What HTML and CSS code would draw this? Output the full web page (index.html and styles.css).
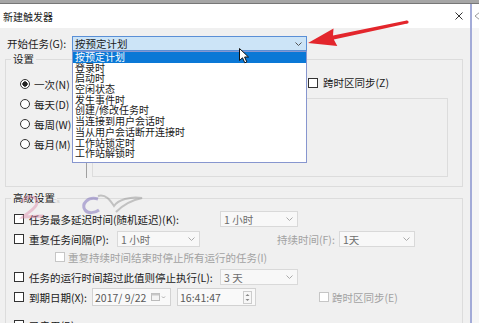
FILE: index.html
```html
<!DOCTYPE html>
<html lang="zh-CN">
<head>
    <meta charset="UTF-8">
    <meta name="viewport" content="width=device-width, initial-scale=1.0">
    <title>新建触发器</title>
    <link rel="stylesheet" href="styles.css">
</head>
<body>
    <div class="frame-top"></div>
    <div class="screen">
        <div class="dialog">
            <div class="titlebar">
                <span class="title">新建触发器</span>
                <svg class="close" width="8" height="8" viewBox="0 0 8 8"><path d="M0.5 0.5L7.5 7.5M7.5 0.5L0.5 7.5" stroke="#333" stroke-width="1"/></svg>
            </div>
            <div class="body">
                <div class="start-row">
                    <span class="start-label">开始任务(G):</span>
                    <div class="combo">
                        <span>按预定计划</span>
                        <svg class="chev" width="7" height="4" viewBox="0 0 7 4"><polyline points="0.5,0.5 3.5,3.5 6.5,0.5" fill="none" stroke="#555" stroke-width="1"/></svg>
                        <ul class="droplist">
                            <li class="active">按预定计划</li>
                            <li>登录时</li>
                            <li>启动时</li>
                            <li>空闲状态</li>
                            <li>发生事件时</li>
                            <li>创建/修改任务时</li>
                            <li>当连接到用户会话时</li>
                            <li>当从用户会话断开连接时</li>
                            <li>工作站锁定时</li>
                            <li>工作站解锁时</li>
                        </ul>
                    </div>
                </div>

                <fieldset class="group">
                    <legend>设置</legend>
                    <div class="set-body">
                        <div class="radios">
                            <div class="radio-row"><span class="radio checked"></span>一次(N)</div>
                            <div class="radio-row"><span class="radio"></span>每天(D)</div>
                            <div class="radio-row"><span class="radio"></span>每周(W)</div>
                            <div class="radio-row"><span class="radio"></span>每月(M)</div>
                        </div>
                        <div class="vsep"></div>
                        <div class="set-right">
                            <div class="start-line"><span class="chk"></span>跨时区同步(Z)</div>
                            <div class="inner-box"></div>
                        </div>
                    </div>
                </fieldset>

                <fieldset class="group adv">
                    <legend>高级设置</legend>
                    <div class="adv-body">
                        <div class="row">
                            <span class="chk"></span>
                            <span class="lbl lbl-wide">任务最多延迟时间(随机延迟)(K):</span>
                            <div class="sel w78"><span>1 小时</span><svg class="chev" width="7" height="4" viewBox="0 0 7 4"><polyline points="0.5,0.5 3.5,3.5 6.5,0.5" fill="none" stroke="#aaa" stroke-width="1"/></svg></div>
                        </div>
                        <div class="row">
                            <span class="chk"></span>
                            <span class="lbl lbl-repeat">重复任务间隔(P):</span>
                            <div class="sel w83"><span>1 小时</span><svg class="chev" width="7" height="4" viewBox="0 0 7 4"><polyline points="0.5,0.5 3.5,3.5 6.5,0.5" fill="none" stroke="#aaa" stroke-width="1"/></svg></div>
                            <span class="lbl lbl-dur off">持续时间(F):</span>
                            <div class="sel w76"><span>1天</span><svg class="chev" width="7" height="4" viewBox="0 0 7 4"><polyline points="0.5,0.5 3.5,3.5 6.5,0.5" fill="none" stroke="#aaa" stroke-width="1"/></svg></div>
                        </div>
                        <div class="row row-sub">
                            <span class="chk off"></span>
                            <span class="off">重复持续时间结束时停止所有运行的任务(I)</span>
                        </div>
                        <div class="row row-stop">
                            <span class="chk"></span>
                            <span class="lbl lbl-wide">任务的运行时间超过此值则停止执行(L):</span>
                            <div class="sel w78"><span>3 天</span><svg class="chev" width="7" height="4" viewBox="0 0 7 4"><polyline points="0.5,0.5 3.5,3.5 6.5,0.5" fill="none" stroke="#aaa" stroke-width="1"/></svg></div>
                        </div>
                        <div class="row">
                            <span class="chk"></span>
                            <span class="lbl lbl-date">到期日期(X):</span>
                            <div class="field">
                                <span>2017/ 9/22</span>
                                <svg class="cal" width="16" height="10" viewBox="0 0 16 10"><rect x="0.5" y="1.5" width="8" height="7" fill="#f4f4f4" stroke="#bbb"/><rect x="0.5" y="1.5" width="8" height="2" fill="#c8c8c8"/><polyline points="11,4.5 12.5,6 14,4.5" fill="none" stroke="#aaa"/></svg>
                            </div>
                            <div class="field time">
                                <span>16:41:47</span>
                                <svg class="spin" width="9" height="13" viewBox="0 0 9 13"><rect x="0.5" y="0.5" width="8" height="12" fill="#f7f7f7" stroke="#ccc"/><polygon points="2.5,5 4.5,3 6.5,5" fill="#888"/><polygon points="2.5,8 4.5,10 6.5,8" fill="#888"/></svg>
                            </div>
                            <span class="chk off sync-e"></span>
                            <span class="off">跨时区同步(E)</span>
                        </div>
                        <div class="row row-on">
                            <span class="chk"></span>
                            <span class="lbl">已启用(B)</span>
                        </div>
                    </div>
                </fieldset>
            </div>
        </div>
        <div class="behind">
            <div class="behind-top">
                <svg width="7" height="10" viewBox="0 0 7 10"><path d="M7 1L2 5L7 9" fill="none" stroke="#999" stroke-width="1"/></svg>
            </div>
        </div>
    </div>

    <svg class="watermark" width="130" height="34" viewBox="0 0 130 34">
        <path d="M4 16 C8 9 20 9 19 17 C18 23 9 27 5 31 L25 30" fill="none" stroke="#e08aa8" stroke-width="3"/>
        <text x="27" y="17" font-size="6" fill="#999" font-family="Liberation Sans, sans-serif">3PCs</text>
        <path d="M80 13 C70 10 63 18 67 24 C70 28 77 27 81 24" fill="none" stroke="#6c5cb4" stroke-width="3"/>
        <path d="M80 10 C88 8 92 14 96 20 C100 14 112 10 124 12 C114 14 104 20 98 26" fill="none" stroke="#8a8a8a" stroke-width="2"/>
    </svg>

    <svg class="arrow" width="115" height="40" viewBox="0 0 115 40">
        <polygon points="8,29 37.3,32 33.8,25.6 107.3,9.6 106.7,6.4 33,21.6 33.5,14.4" fill="#e3262c"/>
        <circle cx="107" cy="8" r="1.6" fill="#e3262c"/>
    </svg>

    <svg class="cursor" width="11" height="16" viewBox="0 0 11 16">
        <path d="M0.5 0.5L0.5 12.5L3.5 9.8L5.8 14.8L7.8 13.9L5.6 9L9.5 9Z" fill="#fff" stroke="#111" stroke-width="1"/>
    </svg>
</body>
</html>
```

FILE: styles.css
```css
body {
    margin: 0;
    width: 479px;
    height: 323px;
    overflow: hidden;
    font-family: "Noto Sans CJK SC", "Noto Sans", sans-serif;
    font-size: 10.5px;
    color: #1a1a1a;
    background-color: #f5f5f5;
}
.frame-top {
    height: 3px;
    background-color: #a6a6a6;
    border-bottom: 1px solid #777;
}
.screen {
    display: flex;
    height: 319px;
    overflow: hidden;
}
.dialog {
    width: 472px;
    flex: none;
    box-sizing: border-box;
    border-right: 2px solid #a3abd8;
    background-color: #f0f0f0;
}
.titlebar {
    display: flex;
    justify-content: space-between;
    align-items: center;
    height: 24px;
    padding: 0 7px 0 3px;
    background-color: #fff;
}
.title {
    font-size: 10px;
}
.behind {
    flex: 1;
    background-color: #f6f6f6;
}
.behind-top {
    height: 24px;
    display: flex;
    align-items: center;
    padding-left: 1px;
    background-color: #fff;
}

/* start combo */
.start-row {
    display: flex;
    align-items: center;
    height: 15px;
    margin-top: 8px;
    padding-left: 7px;
}
.start-label {
    width: 65px;
    flex: none;
}
.combo {
    position: relative;
    z-index: 5;
    display: flex;
    align-items: center;
    width: 235px;
    height: 15px;
    box-sizing: border-box;
    padding: 0 4px 0 2px;
    border: 1px solid #5a8fd6;
    background-color: #cce4f7;
}
.chev {
    margin-left: auto;
}
.droplist {
    position: absolute;
    top: 14px;
    left: -1px;
    right: -1px;
    margin: 0;
    padding: 0 0 3px;
    list-style: none;
    border: 1px solid #8796cf;
    background-color: #fff;
}
.droplist li {
    height: 10.7px;
    line-height: 10.7px;
    padding-left: 2px;
    font-size: 10px;
    white-space: nowrap;
}
.droplist li.active {
    background-color: #0a78d6;
    color: #fff;
}

/* group boxes */
.group {
    margin: 2px 7px 0 5px;
    padding: 0;
    min-width: 0;
    border: 1px solid #dcdcdc;
}
.group legend {
    margin-left: 5px;
    padding: 0 2px;
    line-height: 12px;
}
.adv {
    margin-top: 5px;
}
.set-body {
    display: flex;
    height: 111px;
    margin: 2px 0 8px;
}
.radios {
    width: 80px;
    box-sizing: border-box;
    padding: 7px 0 0 14px;
}
.radio-row {
    display: flex;
    align-items: center;
    height: 20px;
}
.radio {
    width: 10px;
    height: 10px;
    box-sizing: border-box;
    margin-right: 4px;
    border: 1px solid #333;
    border-radius: 50%;
    background-color: #fff;
}
.radio.checked {
    background: radial-gradient(circle, #222 0 2.4px, #fff 2.9px);
}
.vsep {
    width: 1px;
    background-color: #a0a0a0;
}
.set-right {
    display: flex;
    flex-direction: column;
    padding-left: 5px;
}
.start-line {
    display: flex;
    align-items: center;
    height: 31px;
    padding-left: 216px;
}
.inner-box {
    width: 356px;
    height: 79px;
    box-sizing: border-box;
    border: 1px solid #dcdcdc;
}

/* advanced rows */
.adv-body {
    padding: 5px 0 10px 8px;
}
.row {
    display: flex;
    align-items: center;
    height: 20px;
    white-space: nowrap;
}
.row-sub {
    height: 16px;
    padding-left: 41px;
}
.row-stop {
    margin-top: 2px;
}
.row-on {
    margin-top: 8px;
}
.chk {
    width: 10px;
    height: 10px;
    flex: none;
    box-sizing: border-box;
    margin-right: 5px;
    border: 1px solid #333;
    background-color: #fff;
}
.chk.off {
    margin-right: 3px;
    border-color: #c6c6c6;
}
.off {
    color: #a2a2a2;
}
.lbl {
    flex: none;
}
.lbl-wide {
    width: 191px;
}
.lbl-repeat {
    width: 88px;
}
.lbl-dur {
    width: 62px;
    margin-left: 77px;
}
.lbl-date {
    width: 63px;
}
.sel {
    display: flex;
    align-items: center;
    height: 16px;
    box-sizing: border-box;
    padding: 0 4px 0 3px;
    border: 1px solid #d9d9d9;
    background-color: #f8f8f8;
    color: #6d6d6d;
}
.w78 {
    width: 78px;
}
.w83 {
    width: 83px;
}
.w76 {
    width: 76px;
}
.field {
    display: flex;
    align-items: center;
    width: 79px;
    height: 18px;
    box-sizing: border-box;
    padding: 0 3px 0 2px;
    border: 1px solid #d2d2d2;
    background-color: #f9f9f9;
    color: #5a5a5a;
}
.field.time {
    margin-left: 6px;
}
.cal,
.spin {
    margin-left: auto;
}
.sync-e {
    margin-left: 63px;
}

/* overlays */
.watermark {
    position: absolute;
    left: 18px;
    top: 186px;
    opacity: 0.45;
}
.arrow {
    position: absolute;
    left: 300px;
    top: 14px;
}
.cursor {
    position: absolute;
    left: 239px;
    top: 48px;
    z-index: 10;
}
```
